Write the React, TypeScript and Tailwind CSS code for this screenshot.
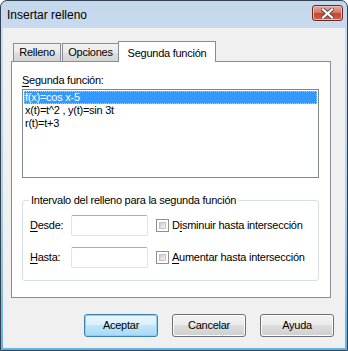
import React from "react";

const font = "font-['Liberation_Sans',Arial,sans-serif]";

const Ul = ({ children }: { children: React.ReactNode }) => (
  <span className="underline underline-offset-[2px]">{children}</span>
);

const TextBox = () => (
  <div className="w-[77px] h-[21px] bg-white border border-[#e2e3ea] border-t-[#abadb3] rounded-[2px]" />
);

const CheckBox = () => (
  <div className="w-[13px] h-[13px] border border-[#8e8f8f] bg-white p-[2px] shrink-0">
    <div className="w-full h-full bg-gradient-to-br from-[#cbcbcb] to-[#f6f6f6] border border-[#c4c4c4]" />
  </div>
);

const Button = ({
  label,
  isDefault,
}: {
  label: string;
  isDefault?: boolean;
}) => (
  <button
    type="button"
    className={
      isDefault
        ? "w-[74px] h-[23px] rounded-[3px] border border-[#3c7fb1] bg-[linear-gradient(#eaf6fd_0%,#d9f0fc_50%,#bee6fd_50%,#a7d9f5_100%)] shadow-[inset_0_0_0_1px_#8ed0f4] text-[11px] tracking-[-0.25px] text-black"
        : "w-[74px] h-[23px] rounded-[3px] border border-[#707070] bg-[linear-gradient(#f2f2f2_0%,#ebebeb_50%,#dddddd_50%,#cfcfcf_100%)] shadow-[inset_0_0_0_1px_#fcfcfc] text-[11px] tracking-[-0.25px] text-black"
    }
  >
    {label}
  </button>
);

const functions = ["f(x)=cos x-5", "x(t)=t^2 , y(t)=sin 3t", "r(t)=t+3"];

export default function App() {
  return (
    <div className={`${font} w-[348px] h-[351px] flex flex-col rounded-t-[7px] border border-[#34414f] bg-[linear-gradient(#c3d7ed_0%,#cbdcef_12%,#a9cdee_60%,#62b3e8_100%)] overflow-hidden`}>
      {/* title bar */}
      <div className="h-[27px] shrink-0 flex items-center justify-between pl-[6px] pr-[4px]">
        <span className="text-[12px] text-black">Insertar relleno</span>
        <div className="w-[31px] h-[16px] mt-[-3px] rounded-[3px] border border-[#6b2a25] bg-[linear-gradient(#e8a89c_0%,#d77b6b_45%,#c2452f_55%,#d2634c_100%)] flex items-center justify-center shadow-[inset_0_0_0_1px_#eebcb2]">
          <svg width="13" height="11" viewBox="0 0 13 11">
            <path
              d="M2 1.5 L11 9.5 M11 1.5 L2 9.5"
              stroke="#5a4a4a"
              strokeWidth="4"
              strokeLinecap="square"
            />
            <path
              d="M2 1.5 L11 9.5 M11 1.5 L2 9.5"
              stroke="#ffffff"
              strokeWidth="2.2"
              strokeLinecap="square"
            />
          </svg>
        </div>
      </div>

      {/* body */}
      <div className="flex-1 mx-[2px] mb-[2px] bg-[#f0f0f0] flex flex-col pt-[13px] pl-[8px] text-[11px] tracking-[-0.25px] text-black">
        {/* tabs */}
        <div className="flex items-end h-[20px] ml-[2px]">
          <div className="w-[48px] h-[18px] border border-b-0 border-[#898c95] bg-[linear-gradient(#f3f3f3,#e9e9e9_50%,#dedede_50%,#d4d4d4)] flex items-center justify-center">
            Relleno
          </div>
          <div className="w-[57px] h-[18px] ml-px border border-b-0 border-[#898c95] bg-[linear-gradient(#f3f3f3,#e9e9e9_50%,#dedede_50%,#d4d4d4)] flex items-center justify-center">
            Opciones
          </div>
          <div className="relative z-10 w-[98px] h-[21px] -ml-px -mb-px border border-b-0 border-[#898c95] bg-white flex items-start pt-[3px] justify-center">
            Segunda función
          </div>
        </div>

        {/* panel */}
        <div className="w-[320px] h-[237px] border border-[#898c95] bg-white pt-[12px] pl-[10px] flex flex-col">
          <div className="leading-[13px] h-[13px]">
            <Ul>S</Ul>egunda función:
          </div>
          <div className="mt-[2px] w-[297px] h-[89px] border border-[#828790] bg-white p-px flex flex-col">
            {functions.map((f, i) => (
              <div
                key={i}
                className={
                  i === 0
                    ? "h-[13px] leading-[13px] pl-px bg-[#3399ff] text-white outline-1 outline-dotted outline-[#f7c27a] -outline-offset-1"
                    : "h-[13px] leading-[13px] pl-px"
                }
              >
                {f}
              </div>
            ))}
          </div>

          {/* group box */}
          <div className="relative mt-[22px] w-[297px] h-[81px] border border-[#d5dfe5] rounded-[3px] pt-[14px] pl-[7px]">
            <span className="absolute -top-[7px] left-[6px] px-[2px] bg-white leading-[13px]">
              Intervalo del relleno para la segunda función
            </span>
            <div className="flex items-center h-[21px]">
              <span className="w-[41px]">
                <Ul>D</Ul>esde:
              </span>
              <TextBox />
              <div className="ml-[8px] flex items-center gap-[3px]">
                <CheckBox />
                <span>
                  D<Ul>i</Ul>sminuir hasta intersección
                </span>
              </div>
            </div>
            <div className="flex items-center h-[21px] mt-[11px]">
              <span className="w-[41px]">
                <Ul>H</Ul>asta:
              </span>
              <TextBox />
              <div className="ml-[8px] flex items-center gap-[3px]">
                <CheckBox />
                <span>
                  <Ul>A</Ul>umentar hasta intersección
                </span>
              </div>
            </div>
          </div>
        </div>

        {/* buttons */}
        <div className="mt-[16px] pr-[11px] flex justify-end gap-[14px]">
          <Button label="Aceptar" isDefault />
          <Button label="Cancelar" />
          <Button label="Ayuda" />
        </div>
      </div>
    </div>
  );
}
